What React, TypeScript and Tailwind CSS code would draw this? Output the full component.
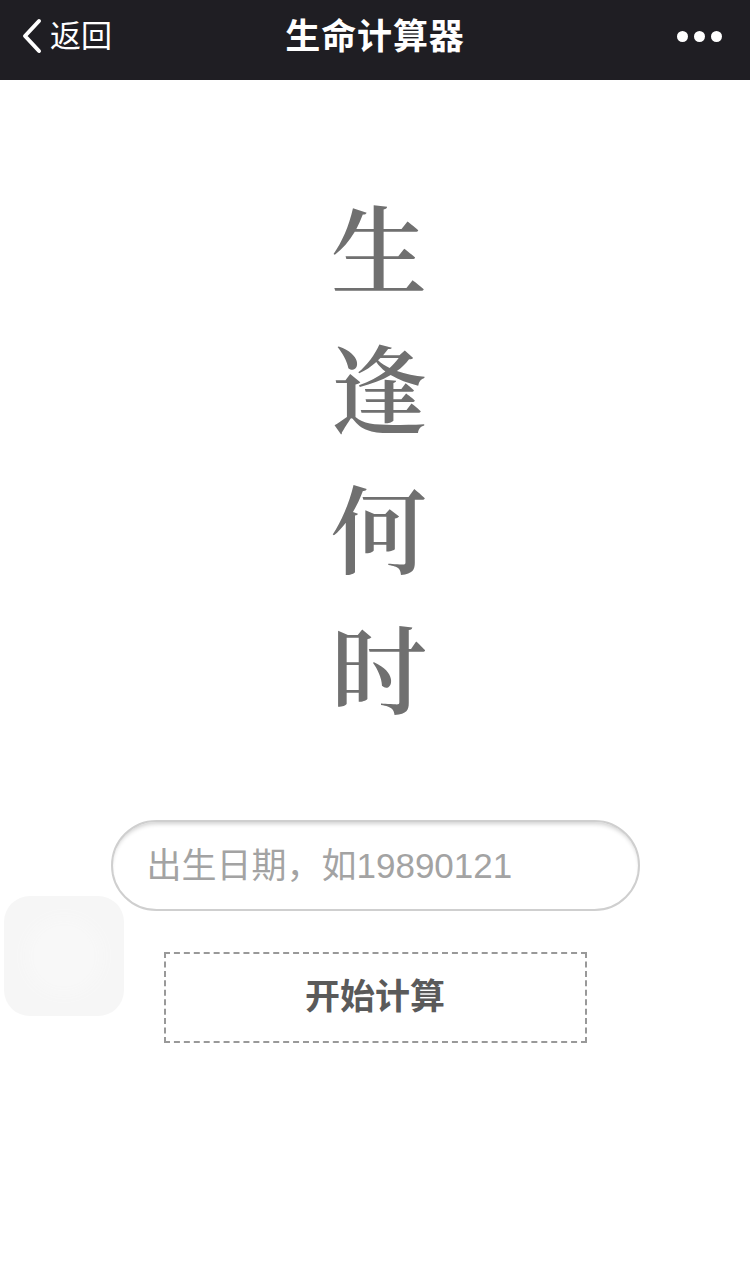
import { useState } from "react"

const CJK = { fontFamily: '"Liberation Sans", "Noto Sans CJK SC", sans-serif' }
const SERIF = { fontFamily: '"Noto Serif CJK SC", "Liberation Serif", "Noto Sans CJK SC", serif' }

export default function App() {
  const [birth, setBirth] = useState("")

  return (
    <div className="relative min-h-[1286px] w-[750px] bg-white" style={CJK}>
      {/* Nav bar */}
      <div className="flex h-[80px] items-center justify-between bg-[#1f1e23] px-5 pb-[8px] text-white">
        <div className="flex w-[160px] items-center gap-[6px]">
          <svg width="24" height="36" viewBox="0 0 24 36" fill="none">
            <path d="M19 3 L5 18 L19 33" stroke="white" strokeWidth="4" strokeLinecap="round" strokeLinejoin="round" />
          </svg>
          <span className="text-[31px] leading-none">返回</span>
        </div>
        <h1 className="text-[35px] font-bold leading-none tracking-wide">生命计算器</h1>
        <div className="flex w-[160px] justify-end gap-[6px] pr-[8px]">
          <span className="h-[11px] w-[11px] rounded-full bg-white" />
          <span className="h-[11px] w-[11px] rounded-full bg-white" />
          <span className="h-[11px] w-[11px] rounded-full bg-white" />
        </div>
      </div>

      {/* Vertical title */}
      <div className="flex flex-col items-center pt-[95px] text-[96px] font-semibold leading-[140px] text-[#707070]" style={SERIF}>
        {["生", "逢", "何", "时"].map(c => (
          <span key={c} className="pl-[8px]">{c}</span>
        ))}
      </div>

      {/* Form */}
      <div className="mt-[85px] flex flex-col items-center">
        <input
          className="h-[91px] w-[529px] rounded-full border-2 border-[#cfcfcf] bg-white px-[34px] text-[35px] text-[#555] shadow-[inset_0_4px_4px_-2px_rgba(0,0,0,0.18)] outline-none placeholder:text-[#a3a3a3]"
          placeholder="出生日期，如19890121"
          value={birth}
          onChange={e => setBirth(e.target.value)}
        />
        <button className="mt-[41px] flex h-[91px] w-[423px] items-center justify-center border-2 border-dashed border-[#999] text-[35px] font-bold text-[#5a5a5a]">
          开始计算
        </button>
      </div>

      {/* floating assistive touch */}
      <div className="absolute left-[4px] top-[896px] flex h-[120px] w-[120px] items-center justify-center rounded-[26px] bg-[#f6f6f6]">
        <div className="h-[60px] w-[60px] rounded-full bg-[#f8f8f8] shadow-[0_0_16px_8px_rgba(248,248,248,1)]" />
      </div>
    </div>
  )
}
